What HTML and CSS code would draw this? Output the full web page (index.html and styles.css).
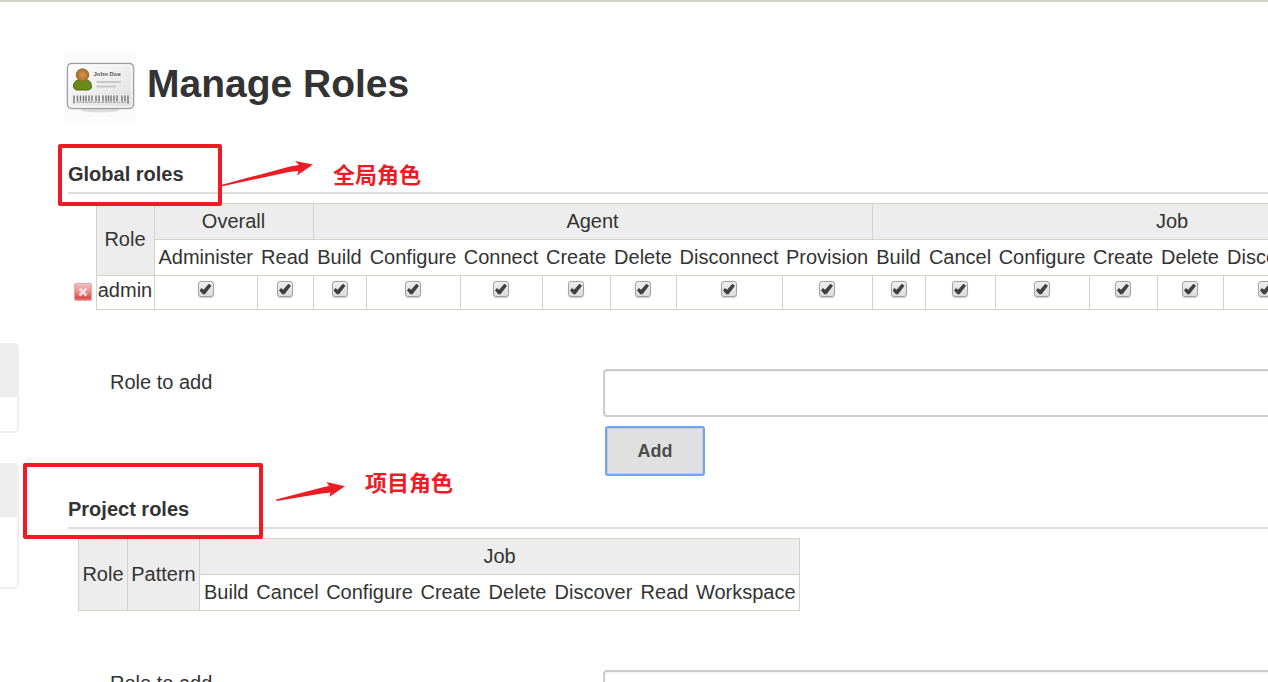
FILE: index.html
```html
<!DOCTYPE html>
<html lang="en">
<head>
<meta charset="utf-8">
<title>Manage Roles</title>
<link rel="stylesheet" href="styles.css">
</head>
<body>
<div class="page">
  <aside class="sidebar">
    <div class="pane pane-queue"><div class="pane-head"></div></div>
    <div class="pane pane-executors"><div class="pane-head"></div></div>
  </aside>
  <main class="main">
    <header class="title-bar">
      <svg class="title-icon" viewBox="0 0 72 72" aria-hidden="true">
        <defs>
          <linearGradient id="card" x1="0" y1="0" x2="1" y2="1"><stop offset="0" stop-color="#fff"/><stop offset="1" stop-color="#dedede"/></linearGradient>
          <radialGradient id="face"><stop offset="0" stop-color="#d39a50"/><stop offset="1" stop-color="#a86d24"/></radialGradient>
        </defs>
        <rect width="72" height="72" fill="#fbfbfb"/>
        <ellipse cx="36" cy="59" rx="19" ry="2.500" fill="#ddd"/>
        <rect x="3.500" y="12.500" width="66" height="45" rx="4" fill="url(#card)" stroke="#a0a0a0" stroke-width="1.500"/>
        <rect x="5" y="14" width="63" height="42" rx="3" fill="none" stroke="#fff"/>
        <path d="M9.500 35c0-4 3-6 5-6h8c3 0 5 3 5 7 0 2-2 3-4 3H13c-2 0-3.500-1.500-3.500-4z" fill="#678c17" stroke="#4f6a12"/>
        <circle cx="18.500" cy="24" r="6.300" fill="url(#face)" stroke="#96662c" stroke-width=".8"/>
        <text class="card-name" x="29.500" y="25">John Doe</text>
        <path d="M32.500 31H57M32.500 35.500H52" stroke="#c8c8c8" stroke-width="1.800"/>
        <path d="M10 44.500v8M13.500 44.500v6M16.500 44.500v6M19.500 44.500v6M22 44.500v6M25 44.500v6M28 44.500v6M32 44.500v6M35 44.500v6M39 44.500v6M42 44.500v6M44.500 44.500v6M47 44.500v6M50 44.500v6M53 44.500v6M58 44.500v6M61 44.500v6M64 44.500v8" stroke="#777" stroke-width="1.400"/>
        <path d="M13 51.500H62" stroke="#aaa" stroke-dasharray="3 1"/>
      </svg>
      <h1 class="title">Manage Roles</h1>
    </header>

    <section class="section">
      <h2 class="section-title">Global roles</h2>
      <table class="roles global">
        <colgroup><col class="w-icon"><col class="w-role"><col class="w-administer"><col class="w-read"><col class="w-build"><col class="w-configure"><col class="w-connect"><col class="w-create"><col class="w-delete"><col class="w-disconnect"><col class="w-provision"><col class="w-build"><col class="w-cancel"><col class="w-configure"><col class="w-create"><col class="w-delete"><col class="w-discover"><col class="w-read"><col class="w-workspace"></colgroup>
        <thead>
          <tr><td class="blank" rowspan="2"></td><th class="group" rowspan="2">Role</th><th class="group" colspan="2">Overall</th><th class="group" colspan="7">Agent</th><th class="group" colspan="8">Job</th></tr>
          <tr><th>Administer</th><th>Read</th><th>Build</th><th>Configure</th><th>Connect</th><th>Create</th><th>Delete</th><th>Disconnect</th><th>Provision</th><th>Build</th><th>Cancel</th><th>Configure</th><th>Create</th><th>Delete</th><th>Discover</th><th>Read</th><th class="last">Workspace</th></tr>
        </thead>
        <tbody>
          <tr>
            <td class="blank"><button class="remove" type="button" aria-label="Remove admin"><svg viewBox="0 0 18 18" aria-hidden="true"><defs><linearGradient id="red" x1="0" y1="0" x2="0" y2="1"><stop offset="0" stop-color="#efc4c4"/><stop offset=".5" stop-color="#e78b8b"/><stop offset=".85" stop-color="#d94a4a"/><stop offset="1" stop-color="#e58d8d"/></linearGradient></defs><rect x=".5" y=".5" width="17" height="17" rx="1.500" fill="url(#red)" stroke="#e5a5a5"/><path d="M5.500 5.500l7 7M12.500 5.500l-7 7" stroke="#f5dede" stroke-width="2.800"/></svg></button></td>
            <td>admin</td>
            <td><input class="tick" type="checkbox" checked aria-label="Overall Administer"></td>
            <td><input class="tick" type="checkbox" checked aria-label="Overall Read"></td>
            <td><input class="tick" type="checkbox" checked aria-label="Agent Build"></td>
            <td><input class="tick" type="checkbox" checked aria-label="Agent Configure"></td>
            <td><input class="tick" type="checkbox" checked aria-label="Agent Connect"></td>
            <td><input class="tick" type="checkbox" checked aria-label="Agent Create"></td>
            <td><input class="tick" type="checkbox" checked aria-label="Agent Delete"></td>
            <td><input class="tick" type="checkbox" checked aria-label="Agent Disconnect"></td>
            <td><input class="tick" type="checkbox" checked aria-label="Agent Provision"></td>
            <td><input class="tick" type="checkbox" checked aria-label="Job Build"></td>
            <td><input class="tick" type="checkbox" checked aria-label="Job Cancel"></td>
            <td><input class="tick" type="checkbox" checked aria-label="Job Configure"></td>
            <td><input class="tick" type="checkbox" checked aria-label="Job Create"></td>
            <td><input class="tick" type="checkbox" checked aria-label="Job Delete"></td>
            <td><input class="tick" type="checkbox" checked aria-label="Job Discover"></td>
            <td><input class="tick" type="checkbox" checked aria-label="Job Read"></td>
            <td><input class="tick" type="checkbox" checked aria-label="Job Workspace"></td>
          </tr>
        </tbody>
      </table>
      <form class="add-form">
        <label class="add-label" for="global-role">Role to add</label>
        <div class="add-field">
          <input class="text" id="global-role" type="text">
          <button class="add" type="button">Add</button>
        </div>
      </form>
    </section>

    <section class="section">
      <h2 class="section-title">Project roles</h2>
      <table class="roles project">
        <colgroup><col class="w-role-narrow"><col class="w-pattern"><col class="w-build"><col class="w-cancel"><col class="w-configure"><col class="w-create"><col class="w-delete"><col class="w-discover"><col class="w-read"><col class="w-workspace"></colgroup>
        <thead>
          <tr><th class="group" rowspan="2">Role</th><th class="group" rowspan="2">Pattern</th><th class="group" colspan="8">Job</th></tr>
          <tr><th>Build</th><th>Cancel</th><th>Configure</th><th>Create</th><th>Delete</th><th>Discover</th><th>Read</th><th class="last">Workspace</th></tr>
        </thead>
      </table>
      <form class="add-form">
        <label class="add-label" for="project-role">Role to add</label>
        <div class="add-field"><input class="text" id="project-role" type="text"></div>
      </form>
    </section>
  </main>

  <div class="mark mark-global"></div>
  <div class="mark mark-project"></div>
  <svg class="arrow arrow-global" viewBox="0 0 94 28" aria-hidden="true"><path d="M0 26L69 7.500 78 6 74 2 92 5.500 76 16.500 77.500 12 68 13 0 27.500z"/></svg>
  <svg class="arrow arrow-project" viewBox="0 0 70 20" aria-hidden="true"><path d="M0 17.500L46 5.500 53 4 50.500 0 69 4.300 53.500 14.800 54.500 10.500 46 11.500 .5 19z"/></svg>
  <p class="note note-global" lang="zh">全局角色</p>
  <p class="note note-project" lang="zh">项目角色</p>
</div>
</body>
</html>
```
FILE: styles.css
```css
* { box-sizing: border-box; }
body {
  margin: 0;
  height: 100vh;
  overflow: hidden;
  background: #fff;
  color: #333;
  font: 20px/24px "Liberation Sans", Arial, sans-serif;
}
.page {
  position: relative;
  display: flex;
  min-height: 100vh;
  border-top: 2px solid #d3d3cd;
}
.sidebar {
  display: flex;
  flex-direction: column;
  gap: 30px;
  width: 19px;
  padding-top: 341px;
}
.pane {
  border: 2px solid #f0f0f0;
  border-left: 0;
  border-radius: 0 5px 5px 0;
}
.pane-head { height: 52px; background: #eee; }
.pane-queue { height: 90px; }
.pane-executors { height: 126px; }

.main { flex: 1; min-width: 0; padding: 49px 0 0 45px; }
.title-bar { display: flex; align-items: center; gap: 11px; height: 72px; }
.title-icon { width: 72px; height: 72px; }
.card-name { font: bold 6px "Liberation Sans", sans-serif; fill: #555; }
.title { margin: 0 0 6px; font-size: 39px; line-height: 44px; }

.section { padding-left: 4px; }
.section-title {
  margin: 0 0 9px;
  padding: 39px 0 6px;
  border-bottom: 2px solid #ddd;
  font-size: 20px;
  line-height: 24px;
}

.roles { table-layout: fixed; border-collapse: collapse; text-align: center; }
.global { width: 1404px; }
.project { width: 721px; margin-left: 10px; }
.roles th, .roles td {
  padding: 0;
  border: 1px solid #d3d3cb;
  font-weight: normal;
  white-space: nowrap;
}
.roles th { height: 36px; padding-bottom: 2px; border-left: 0; border-right: 0; }
.roles .group { border: 1px solid #d3d3cb; background: #ededed; }
.roles th.last { border-right: 1px solid #d3d3cb; }
.roles td { height: 34px; padding-top: 2px; vertical-align: top; }
.roles .blank { border: 0; }
.w-icon { width: 28px; }
.w-role { width: 58px; }
.w-role-narrow { width: 49px; }
.w-pattern { width: 72px; }
.w-administer { width: 103px; }
.w-read { width: 56px; }
.w-build { width: 53px; }
.w-configure { width: 94px; }
.w-connect { width: 82px; }
.w-create { width: 68px; }
.w-delete { width: 66px; }
.w-disconnect { width: 106px; }
.w-provision { width: 90px; }
.w-cancel { width: 70px; }
.w-discover { width: 86px; }
.w-workspace { width: 107px; }

.tick {
  appearance: none;
  display: block;
  width: 16px;
  height: 16px;
  margin: 3px auto 0;
  border: 1px solid #a3a3a3;
  border-radius: 3px;
  background: linear-gradient(#eee, #dcdcdc);
  box-shadow: 0 1px 1px #ccc;
}
.tick:checked::after {
  content: "";
  display: block;
  width: 12px;
  height: 12px;
  margin: 1px;
  background: #404040;
  clip-path: polygon(0 62%, 16% 42%, 34% 56%, 78% 6%, 100% 22%, 46% 94%, 28% 94%);
}
.remove {
  display: block;
  width: 18px;
  height: 18px;
  margin: 5px 0 0 6px;
  padding: 0;
  border: 0;
  background: none;
}
.remove svg { display: block; }

.add-form {
  display: grid;
  grid-template-columns: 493px 1fr;
  padding: 59px 0 0 42px;
}
.add-label { padding-top: 1px; }
.add-field { display: flex; flex-direction: column; align-items: flex-start; gap: 9px; overflow: hidden; }
.text {
  width: calc(100% + 8px);
  height: 48px;
  padding: 0 12px;
  border: 2px solid #ccc;
  border-radius: 4px;
  box-shadow: inset 0 1px 2px #eee;
  font: inherit;
}
.add {
  width: 100px;
  height: 50px;
  margin-left: 2px;
  border: 2px solid #6ea5f4;
  border-radius: 3px;
  background: #e0e0e0;
  box-shadow: inset 0 0 0 1px #ccc;
  color: #4d4d4d;
  font: bold 18px "Liberation Sans", Arial, sans-serif;
}
.section + .section .section-title { padding-top: 21px; }

/* Red annotations drawn over the page */
.mark { position: absolute; border: 4px solid #ed1c24; border-radius: 2px; }
.mark-global { left: 58px; top: 142px; width: 164px; height: 62px; }
.mark-project { left: 23px; top: 461px; width: 240px; height: 76px; }
.arrow { position: absolute; fill: #ed1c24; }
.arrow-global { left: 221px; top: 157px; width: 94px; height: 28px; }
.arrow-project { left: 276px; top: 480px; width: 70px; height: 20px; }
.note {
  position: absolute;
  margin: 0;
  color: #ed1c24;
  font: bold 22px/30px "Noto Sans CJK SC", sans-serif;
}
.note-global { left: 333px; top: 156px; }
.note-project { left: 365px; top: 464px; }
```
